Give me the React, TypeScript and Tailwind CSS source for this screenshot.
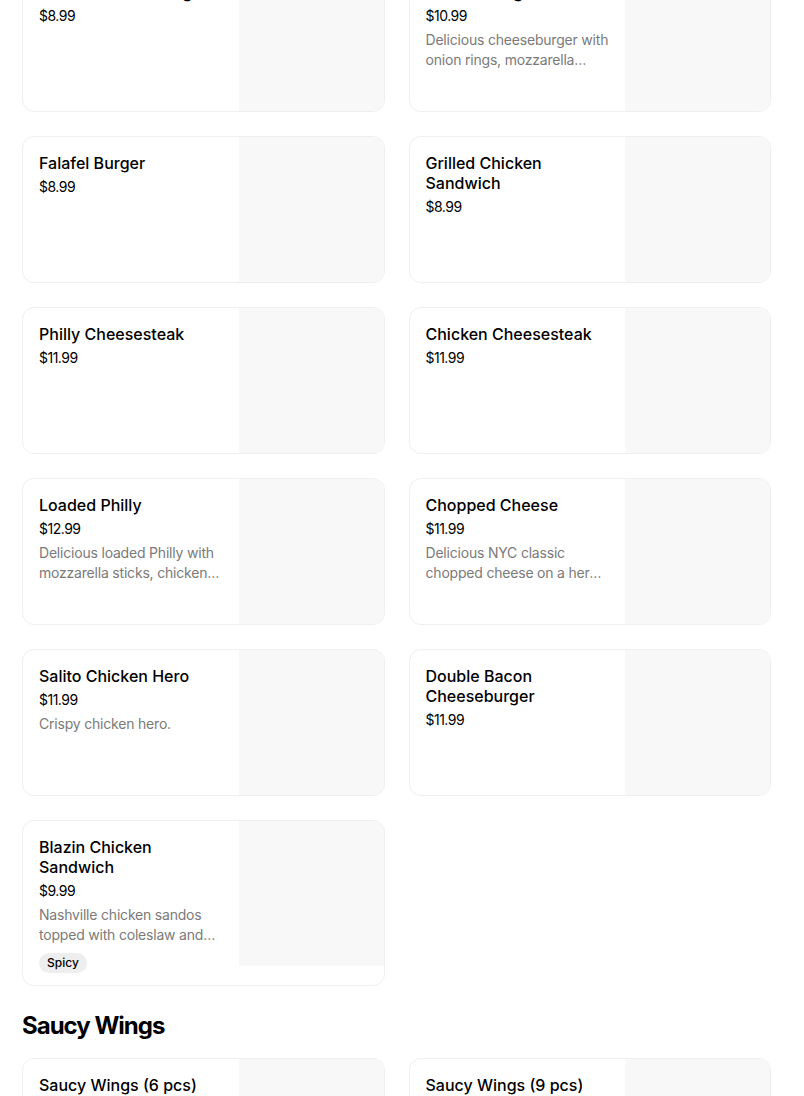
type Item = {
  name: string;
  price: string;
  description?: string;
  tag?: string;
};

const burgers: Item[] = [
  { name: 'Classic Cheeseburger', price: '$8.99' },
  {
    name: 'Loaded Burger',
    price: '$10.99',
    description: 'Delicious cheeseburger with onion rings, mozzarella sticks, bacon and special sauce.',
  },
  { name: 'Falafel Burger', price: '$8.99' },
  { name: 'Grilled Chicken Sandwich', price: '$8.99' },
  { name: 'Philly Cheesesteak', price: '$11.99' },
  { name: 'Chicken Cheesesteak', price: '$11.99' },
  {
    name: 'Loaded Philly',
    price: '$12.99',
    description: 'Delicious loaded Philly with mozzarella sticks, chicken tenders and cheese sauce.',
  },
  {
    name: 'Chopped Cheese',
    price: '$11.99',
    description: 'Delicious NYC classic chopped cheese on a hero with lettuce, tomato and onions.',
  },
  { name: 'Salito Chicken Hero', price: '$11.99', description: 'Crispy chicken hero.' },
  { name: 'Double Bacon Cheeseburger', price: '$11.99' },
  {
    name: 'Blazin Chicken Sandwich',
    price: '$9.99',
    description: 'Nashville chicken sandos topped with coleslaw and pickles on a brioche bun.',
    tag: 'Spicy',
  },
];

const wings: Item[] = [
  { name: 'Saucy Wings (6 pcs)', price: '$8.99' },
  { name: 'Saucy Wings (9 pcs)', price: '$12.99' },
];

function MenuCard({ item }: { item: Item }) {
  return (
    <div className="flex items-start overflow-hidden rounded-xl border border-[#efefef] bg-white">
      <div className="min-w-0 flex-1 px-4 pt-4 pb-3">
        <div className="text-[16px] leading-5 font-medium text-black">{item.name}</div>
        <div className="mt-1 text-[14px] leading-5 tracking-[-0.5px] text-black">{item.price}</div>
        {item.description && (
          <div className="mt-1 line-clamp-2 text-[14px] leading-5 tracking-[-0.2px] text-[#7a7a7a]">
            {item.description}
          </div>
        )}
        {item.tag && (
          <div className="mt-2 flex">
            <span className="flex h-5 items-center rounded-full bg-[#eeeeee] px-2 text-[12px] leading-4 font-medium text-black">
              {item.tag}
            </span>
          </div>
        )}
      </div>
      <div className="h-[145px] w-[145px] shrink-0 bg-[#f8f8f8]" />
    </div>
  );
}

export default function App() {
  return (
    <div className="min-h-screen bg-white font-['Inter',sans-serif]">
      <div className="-mt-[35px] pl-[22px] pr-[33px]">
        <div className="grid grid-cols-2 gap-6">
          {burgers.map((item) => (
            <MenuCard key={item.name} item={item} />
          ))}
        </div>

        <h2 className="mt-6 mb-4 text-[24px] leading-8 font-bold tracking-[-1px] text-black">Saucy Wings</h2>

        <div className="grid grid-cols-2 gap-6">
          {wings.map((item) => (
            <MenuCard key={item.name} item={item} />
          ))}
        </div>
      </div>
    </div>
  );
}
